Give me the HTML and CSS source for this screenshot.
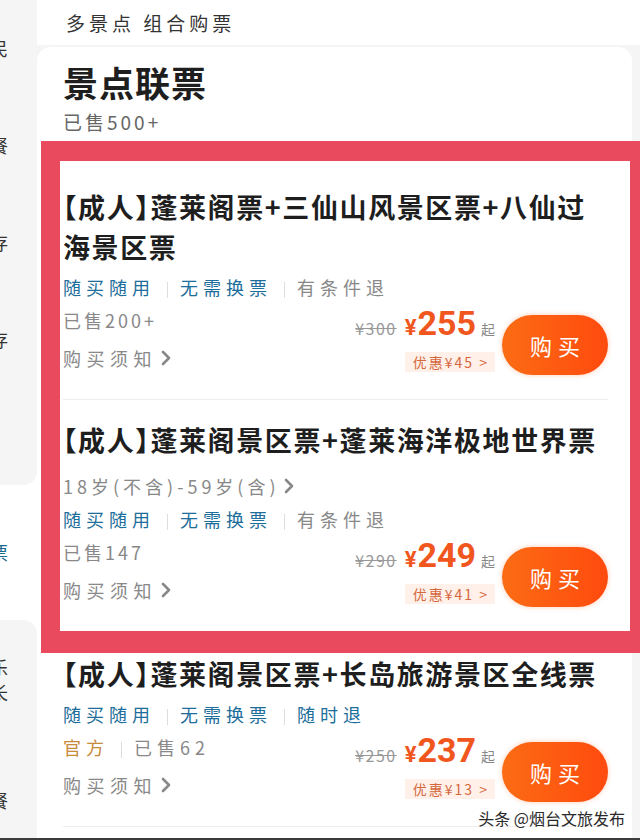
FILE: index.html
```html
<!DOCTYPE html>
<html lang="zh-CN">

<head>
    <meta charset="UTF-8">
    <title>景点联票</title>
    <link rel="stylesheet" href="styles.css">
</head>

<body>
    <div class="screen">
        <!-- 左侧分类栏，只露出一小截 -->
        <aside class="sidebar">
            <div class="side-item"><span>农家民</span></div>
            <div class="side-item"><span>特色餐</span></div>
            <div class="side-item"><span>行李寄存</span></div>
            <div class="side-item"><span>物品寄存</span></div>
            <div class="side-item is-before"></div>
            <div class="side-item is-active"><span>景点联票</span></div>
            <div class="side-item is-after"><span>游乐<br>成长</span></div>
            <div class="side-item is-tall"><span>特色餐</span></div>
        </aside>

        <main class="content">
            <header class="top-bar">多景点 组合购票</header>

            <section class="card">
                <h1 class="card-title">景点联票</h1>
                <div class="card-sold">已售500+</div>

                <div class="highlight">
                    <div class="ticket">
                        <div class="ticket-name">【成人】蓬莱阁票+三仙山风景区票+八仙过海景区票</div>
                        <div class="ticket-body">
                            <div class="ticket-info">
                                <div class="info-row">
                                    <span class="tag">随买随用</span><span class="tag">无需换票</span><span class="tag tag-gray">有条件退</span>
                                </div>
                                <div class="info-row">已售200+</div>
                                <div class="info-row notice">购买须知
                                    <svg class="chevron" width="10" height="16" viewBox="0 0 10 16"><polyline points="2,2 8,8 2,14" fill="none" stroke="#888" stroke-width="2.6" stroke-linecap="round" stroke-linejoin="round"/></svg>
                                </div>
                            </div>
                            <div class="ticket-buy">
                                <div class="price-box">
                                    <div class="price-line">
                                        <span class="price-old">¥300</span>
                                        <span class="price-now"><small>¥</small>255</span>
                                        <span class="price-from">起</span>
                                    </div>
                                    <div class="discount">优惠¥45 &gt;</div>
                                </div>
                                <button class="buy-btn">购买</button>
                            </div>
                        </div>
                    </div>

                    <div class="ticket">
                        <div class="ticket-name">【成人】蓬莱阁景区票+蓬莱海洋极地世界票</div>
                        <div class="ticket-body">
                            <div class="ticket-info">
                                <div class="info-row age">18岁(不含)-59岁(含)
                                    <svg class="chevron" width="10" height="16" viewBox="0 0 10 16"><polyline points="2,2 8,8 2,14" fill="none" stroke="#888" stroke-width="2.6" stroke-linecap="round" stroke-linejoin="round"/></svg>
                                </div>
                                <div class="info-row">
                                    <span class="tag">随买随用</span><span class="tag">无需换票</span><span class="tag tag-gray">有条件退</span>
                                </div>
                                <div class="info-row">已售147</div>
                                <div class="info-row notice">购买须知
                                    <svg class="chevron" width="10" height="16" viewBox="0 0 10 16"><polyline points="2,2 8,8 2,14" fill="none" stroke="#888" stroke-width="2.6" stroke-linecap="round" stroke-linejoin="round"/></svg>
                                </div>
                            </div>
                            <div class="ticket-buy">
                                <div class="price-box">
                                    <div class="price-line">
                                        <span class="price-old">¥290</span>
                                        <span class="price-now"><small>¥</small>249</span>
                                        <span class="price-from">起</span>
                                    </div>
                                    <div class="discount">优惠¥41 &gt;</div>
                                </div>
                                <button class="buy-btn">购买</button>
                            </div>
                        </div>
                    </div>
                </div>

                <div class="ticket">
                    <div class="ticket-name">【成人】蓬莱阁景区票+长岛旅游景区全线票</div>
                    <div class="ticket-body">
                        <div class="ticket-info">
                            <div class="info-row">
                                <span class="tag">随买随用</span><span class="tag">无需换票</span><span class="tag">随时退</span>
                            </div>
                            <div class="info-row">
                                <span class="tag tag-official">官方</span><span class="tag tag-gray">已售62</span>
                            </div>
                            <div class="info-row notice">购买须知
                                <svg class="chevron" width="10" height="16" viewBox="0 0 10 16"><polyline points="2,2 8,8 2,14" fill="none" stroke="#888" stroke-width="2.6" stroke-linecap="round" stroke-linejoin="round"/></svg>
                            </div>
                        </div>
                        <div class="ticket-buy">
                            <div class="price-box">
                                <div class="price-line">
                                    <span class="price-old">¥250</span>
                                    <span class="price-now"><small>¥</small>237</span>
                                    <span class="price-from">起</span>
                                </div>
                                <div class="discount">优惠¥13 &gt;</div>
                            </div>
                            <button class="buy-btn">购买</button>
                        </div>
                    </div>
                </div>
            </section>
        </main>

        <div class="watermark">头条 @烟台文旅发布</div>
    </div>
</body>

</html>
```

FILE: styles.css
```css
* {
    box-sizing: border-box;
}

body {
    margin: 0;
    font-family: "Noto Sans CJK SC", "Noto Sans", sans-serif;
    color: #222;
}

.screen {
    position: relative;
    display: flex;
    width: 640px;
    height: 840px;
    overflow: hidden;
    background: #f5f5f5;
    border-bottom: 2px solid #3c3c3c;
}

/* 左侧分类栏 */
.sidebar {
    width: 37px;
    flex-shrink: 0;
    background: #fff;
}

.side-item {
    height: 97px;
    display: flex;
    align-items: center;
    justify-content: flex-end; /* 文字溢出到左边被裁掉 */
    padding-right: 29px;
    overflow: hidden;
    white-space: nowrap;
    background: #f5f5f5;
    font-size: 18px;
    line-height: 25px;
    color: #333;
}

.side-item span {
    text-align: right;
}

.side-item.is-before {
    border-bottom-right-radius: 14px;
}

.side-item.is-active {
    height: 135px;
    background: transparent;
    color: #1b6a8e;
}

.side-item.is-after {
    height: 120px;
    border-top-right-radius: 14px;
}

.side-item.is-tall {
    height: 120px;
}

/* 右侧内容 */
.content {
    flex: 1;
    display: flex;
    flex-direction: column;
}

.top-bar {
    height: 45px;
    line-height: 45px;
    padding-left: 29px;
    background: #fff;
    font-size: 19px;
    letter-spacing: 4px;
    color: #333;
}

.card {
    flex: 1;
    margin: 2px 8px 0 0;
    padding: 13px 24px 0 26px;
    background: #fff;
    border-radius: 14px 14px 0 0;
}

.card-title {
    margin: 0;
    font-size: 35px;
    line-height: 44px;
    font-weight: 700;
    letter-spacing: 1px;
    color: #1e1e1e;
}

.card-sold {
    margin-top: 5px;
    font-size: 19px;
    line-height: 26px;
    letter-spacing: 3px;
    color: #666;
}

/* 红色标注框 */
.highlight {
    margin: 6px -32px 0 -22px;
    padding: 0 22px 0 3px;
    border: solid #e94a5e;
    border-width: 20px 10px 22px 19px;
}

.ticket {
    padding: 20px 0 24px;
    border-bottom: 1px solid #eee;
}

.highlight .ticket:first-child {
    padding-top: 26px;
}

.highlight .ticket:last-child {
    border-bottom: 0;
}

.highlight + .ticket {
    padding-top: 1px;
}

.ticket-name {
    padding-right: 6px;
    font-size: 27px;
    line-height: 40px;
    font-weight: 700;
    letter-spacing: 1.6px;
    font-feature-settings: "halt"; /* 方括号用半宽 */
    color: #1e1e1e;
}

/* 左侧信息和右侧价格叠在同一个格子里 */
.ticket-body {
    display: grid;
    margin-top: 3px;
}

.ticket-info,
.ticket-buy {
    grid-area: 1 / 1;
}

.info-row {
    height: 33px;
    display: flex;
    align-items: center;
    white-space: nowrap;
    font-size: 18px;
    letter-spacing: 3px;
    color: #888;
}

.info-row.age {
    margin-top: 6px;
    letter-spacing: 4px;
}

.info-row.notice {
    height: 34px;
    margin-top: 5px;
    letter-spacing: 5.5px;
}

.chevron {
    margin-left: 4px;
}

.tag {
    letter-spacing: 5px;
    color: #1d6e9a;
}

.tag + .tag::before {
    content: "";
    display: inline-block;
    width: 1px;
    height: 16px;
    margin: 0 12px;
    vertical-align: middle;
    background: #ddd;
}

.tag-gray {
    color: #888;
}

.tag-official {
    color: #c98a3c;
}

/* 价格和购买按钮 */
.ticket-buy {
    justify-self: end;
    align-self: end;
    display: flex;
    align-items: flex-end;
    gap: 7px;
}

.price-box {
    display: flex;
    flex-direction: column;
    align-items: flex-end;
    margin-bottom: 3px;
}

.price-line {
    display: flex;
    align-items: baseline;
    line-height: 30px;
}

.price-old {
    margin-right: 8px;
    font-size: 16px;
    letter-spacing: 1.5px;
    color: #999;
    text-decoration: line-through;
}

.price-now {
    font-family: Roboto, "Liberation Sans", sans-serif;
    font-size: 34px;
    font-weight: 700;
    color: #f0561d;
}

.price-now small {
    margin-right: 1px;
    font-size: 22px;
}

.price-from {
    margin-left: 5px;
    font-size: 14px;
    color: #888;
}

.discount {
    margin-top: 8px;
    padding: 0 6px 0 8px;
    font-size: 14px;
    line-height: 20px;
    letter-spacing: 2px;
    color: #d6683e;
    background: #fff1ea;
}

.buy-btn {
    width: 106px;
    height: 60px;
    padding: 0 0 0 6px;
    border: 0;
    border-radius: 30px;
    font-family: inherit;
    font-size: 22px;
    letter-spacing: 6px;
    color: #fff;
    background: linear-gradient(90deg, #fb6c14, #ff4a0e);
    box-shadow: 0 0 5px rgba(255, 110, 40, .35);
}

/* 右下角水印 */
.watermark {
    position: absolute;
    right: 15px;
    bottom: 8px;
    font-size: 16px;
    color: #2a2a2a;
    text-shadow: 0 0 2px #fff, 0 0 3px #fff;
}
```
